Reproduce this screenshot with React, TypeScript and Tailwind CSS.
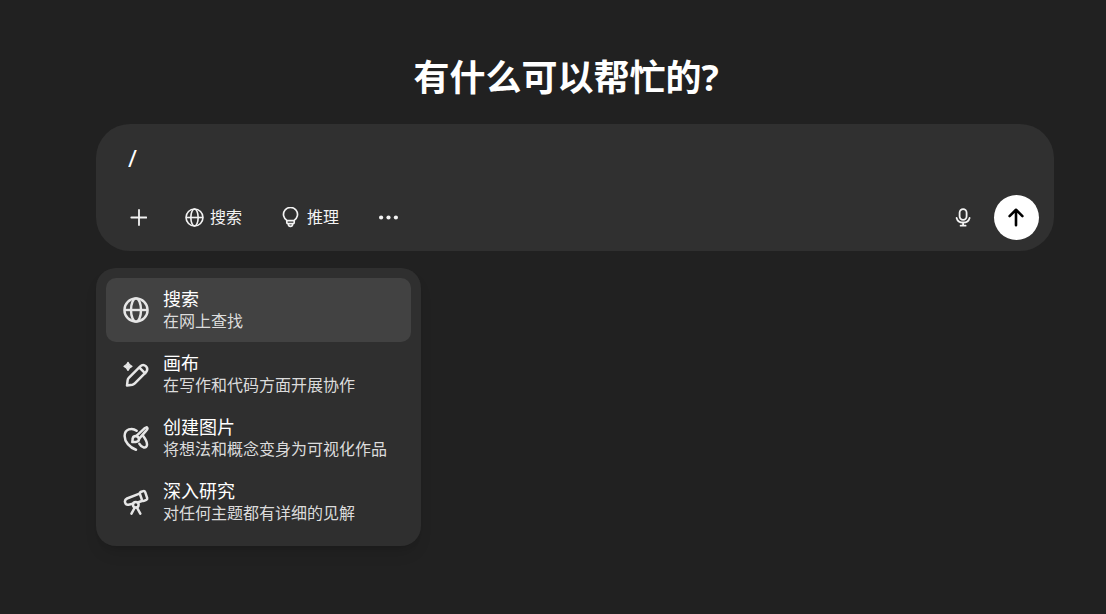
import type { ReactNode } from "react";

function Globe({ className, strokeWidth }: { className: string; strokeWidth: number }) {
  return (
    <svg viewBox="0 0 26 26" fill="none" stroke="currentColor" strokeWidth={strokeWidth} className={className} aria-hidden="true">
      <circle cx="13" cy="13" r="11.6" />
      <ellipse cx="13" cy="13" rx="5" ry="11.6" />
      <path d="M1.4 13h23.2" />
    </svg>
  );
}

function MenuIcon({ children }: { children: ReactNode }) {
  return (
    <svg viewBox="0 0 26 26" fill="none" stroke="currentColor" strokeWidth="2.5" strokeLinecap="round" strokeLinejoin="round" className="size-[26px]" aria-hidden="true">
      {children}
    </svg>
  );
}

function Canvas() {
  return (
    <MenuIcon>
      <path d="M5 1.300C5.900 3.900 6.500 4.500 9 5.400 6.500 6.300 5.900 6.900 5 9.500 4.100 6.900 3.500 6.300 1 5.400 3.500 4.500 4.100 3.900 5 1.300Z" fill="currentColor" strokeWidth="1.200" />
      <path d="M4 24.600 4.600 19.400Q4.800 17.900 5.800 16.900L17 5.600Q20 2.600 22.800 5.200T23 11.200L11.800 22.400Q10.800 23.400 9.400 23.700ZM16.200 6.400l6 6" />
    </MenuIcon>
  );
}

function Palette() {
  return (
    <MenuIcon>
      <path d="M13 24.700C6.500 22.500 1.600 16.500 1.600 11 1.600 4 9 2.200 13.600 5.700" />
      <path d="M13.400 10.800 21.500 3.300Q23.600 1.700 24.300 2.800T23.200 5.600L16.200 13.600" />
      <path d="M13 11Q9.800 11.200 9.700 13.700L9.300 17.100 12.700 16.900Q16 16.600 16 13.900 15.500 11.600 13 11Z" />
      <path d="M20.200 11C22.300 13.800 24.500 17.800 23.900 20.400 23 23.600 19 23.200 16.400 18.800" />
    </MenuIcon>
  );
}

function Telescope() {
  return (
    <MenuIcon>
      <path d="M16.500 4.700 4 9.500Q1.300 10.800 2.100 13.500T5.500 15.700L9.700 14.700M15.900 13 19 12" />
      <path d="M18.300 2.700 20.300 2.100Q21.700 1.800 22.200 3.100L24.200 9.100Q24.500 10.400 23.300 10.900L20.900 11.900Q19.500 12.300 19 11L16.900 4.900Q16.600 3.300 18.300 2.700Z" />
      <circle cx="12.800" cy="15.800" r="2.800" />
      <path d="M11.800 18.500 8.500 24.600M13.900 18.500 17.300 24.600" />
    </MenuIcon>
  );
}

const tools = [
  { title: "搜索", description: "在网上查找", icon: <Globe className="size-[26px]" strokeWidth={2.4} /> },
  { title: "画布", description: "在写作和代码方面开展协作", icon: <Canvas /> },
  { title: "创建图片", description: "将想法和概念变身为可视化作品", icon: <Palette /> },
  { title: "深入研究", description: "对任何主题都有详细的见解", icon: <Telescope /> },
];

export default function App() {
  return (
    <main className="min-h-screen bg-[#212121] pt-[54px] pr-[52px] pb-16 pl-24 font-['Noto_Sans','Noto_Sans_CJK_SC',sans-serif] text-white">
      <h1 className="pr-[18px] text-center text-4xl leading-[48px] font-bold">有什么可以帮忙的?</h1>

      <form className="mt-[22px] flex flex-col rounded-[34px] bg-[#303030] pt-5 pr-[15px] pb-[11px] pl-[22px]" onSubmit={(e) => e.preventDefault()}>
        <input aria-label="消息" defaultValue="/" className="h-7 w-full bg-transparent px-[10px] text-2xl leading-7 outline-none" />
        <div className="mt-[23px] flex h-[45px] items-center text-base leading-[23px] text-[#f3f3f3]">
          <button type="button" aria-label="添加" className="grid size-[41px] place-items-center">
            <svg viewBox="0 0 17 17" stroke="currentColor" strokeWidth="1.800" strokeLinecap="round" className="size-[17px]" aria-hidden="true">
              <path d="M9 .9v15.200M1.300 8.500h15" />
            </svg>
          </button>
          <button type="button" className="ml-[26px] flex items-center gap-[6px]">
            <Globe className="size-[19px]" strokeWidth={2.2} />
            搜索
          </button>
          <button type="button" className="ml-10 flex items-center gap-2">
            <svg viewBox="0 0 17 21" fill="none" stroke="currentColor" strokeWidth="1.700" strokeLinejoin="round" className="h-[21px] w-[17px]" aria-hidden="true">
              <path d="M5.300 13.700A7 7 0 1 1 11.700 13.700M4.800 13.700H12.200V15.500Q12.200 16.600 11.100 16.600H5.900Q4.800 16.600 4.800 15.500ZM6.300 16.600V17.500Q6.500 19.300 8.500 19.300T10.700 17.500V16.600" />
            </svg>
            推理
          </button>
          <button type="button" aria-label="更多" className="ml-[29px] grid size-[41px] place-items-center">
            <svg viewBox="0 0 21 7" fill="currentColor" className="h-[7px] w-[21px]" aria-hidden="true">
              <circle cx="3.100" cy="3.500" r="2.100" />
              <circle cx="10.500" cy="3.500" r="2.100" />
              <circle cx="17.900" cy="3.500" r="2.100" />
            </svg>
          </button>
          <button type="button" aria-label="语音输入" className="mr-[10px] ml-auto grid size-[41px] place-items-center">
            <svg viewBox="0 0 17 21" fill="none" stroke="currentColor" strokeWidth="1.800" strokeLinecap="round" className="h-[21px] w-[17px]" aria-hidden="true">
              <rect x="4.600" y="2.200" width="7" height="10.600" rx="3.500" />
              <path d="M1.600 10.900C2.400 13.900 5.100 15.500 8.100 15.500S13.800 13.900 14.600 10.900M8.100 15.500V18.600M5.600 18.700H10.600" />
            </svg>
          </button>
          <button type="submit" aria-label="发送" className="grid size-[45px] place-items-center rounded-full bg-white text-black">
            <svg viewBox="0 0 19 19" fill="none" stroke="currentColor" strokeWidth="2.600" strokeLinecap="round" strokeLinejoin="round" className="size-[19px]" aria-hidden="true">
              <path d="M9 17.200V1.800M2.600 8.100 9 1.800l6.400 6.300" />
            </svg>
          </button>
        </div>
      </form>

      <ul className="mt-[17px] w-[325px] max-w-full rounded-[20px] bg-[#2f2f2f] px-[10px] pt-[10px] pb-3 shadow-lg">
        {tools.map((tool, index) => (
          <li key={tool.title}>
            <button
              type="button"
              className={`flex w-full items-center gap-[14px] rounded-[10px] py-[10px] pl-[17px] text-left ${index === 0 ? "bg-[#424242]" : ""}`}
            >
              <span className="shrink-0 text-[#e6e6e6]">{tool.icon}</span>
              <span className="flex flex-col whitespace-nowrap">
                <span className="text-lg leading-[22px]">{tool.title}</span>
                <span className="text-base leading-[22px] text-[#dcdcdc]">{tool.description}</span>
              </span>
            </button>
          </li>
        ))}
      </ul>
    </main>
  );
}
